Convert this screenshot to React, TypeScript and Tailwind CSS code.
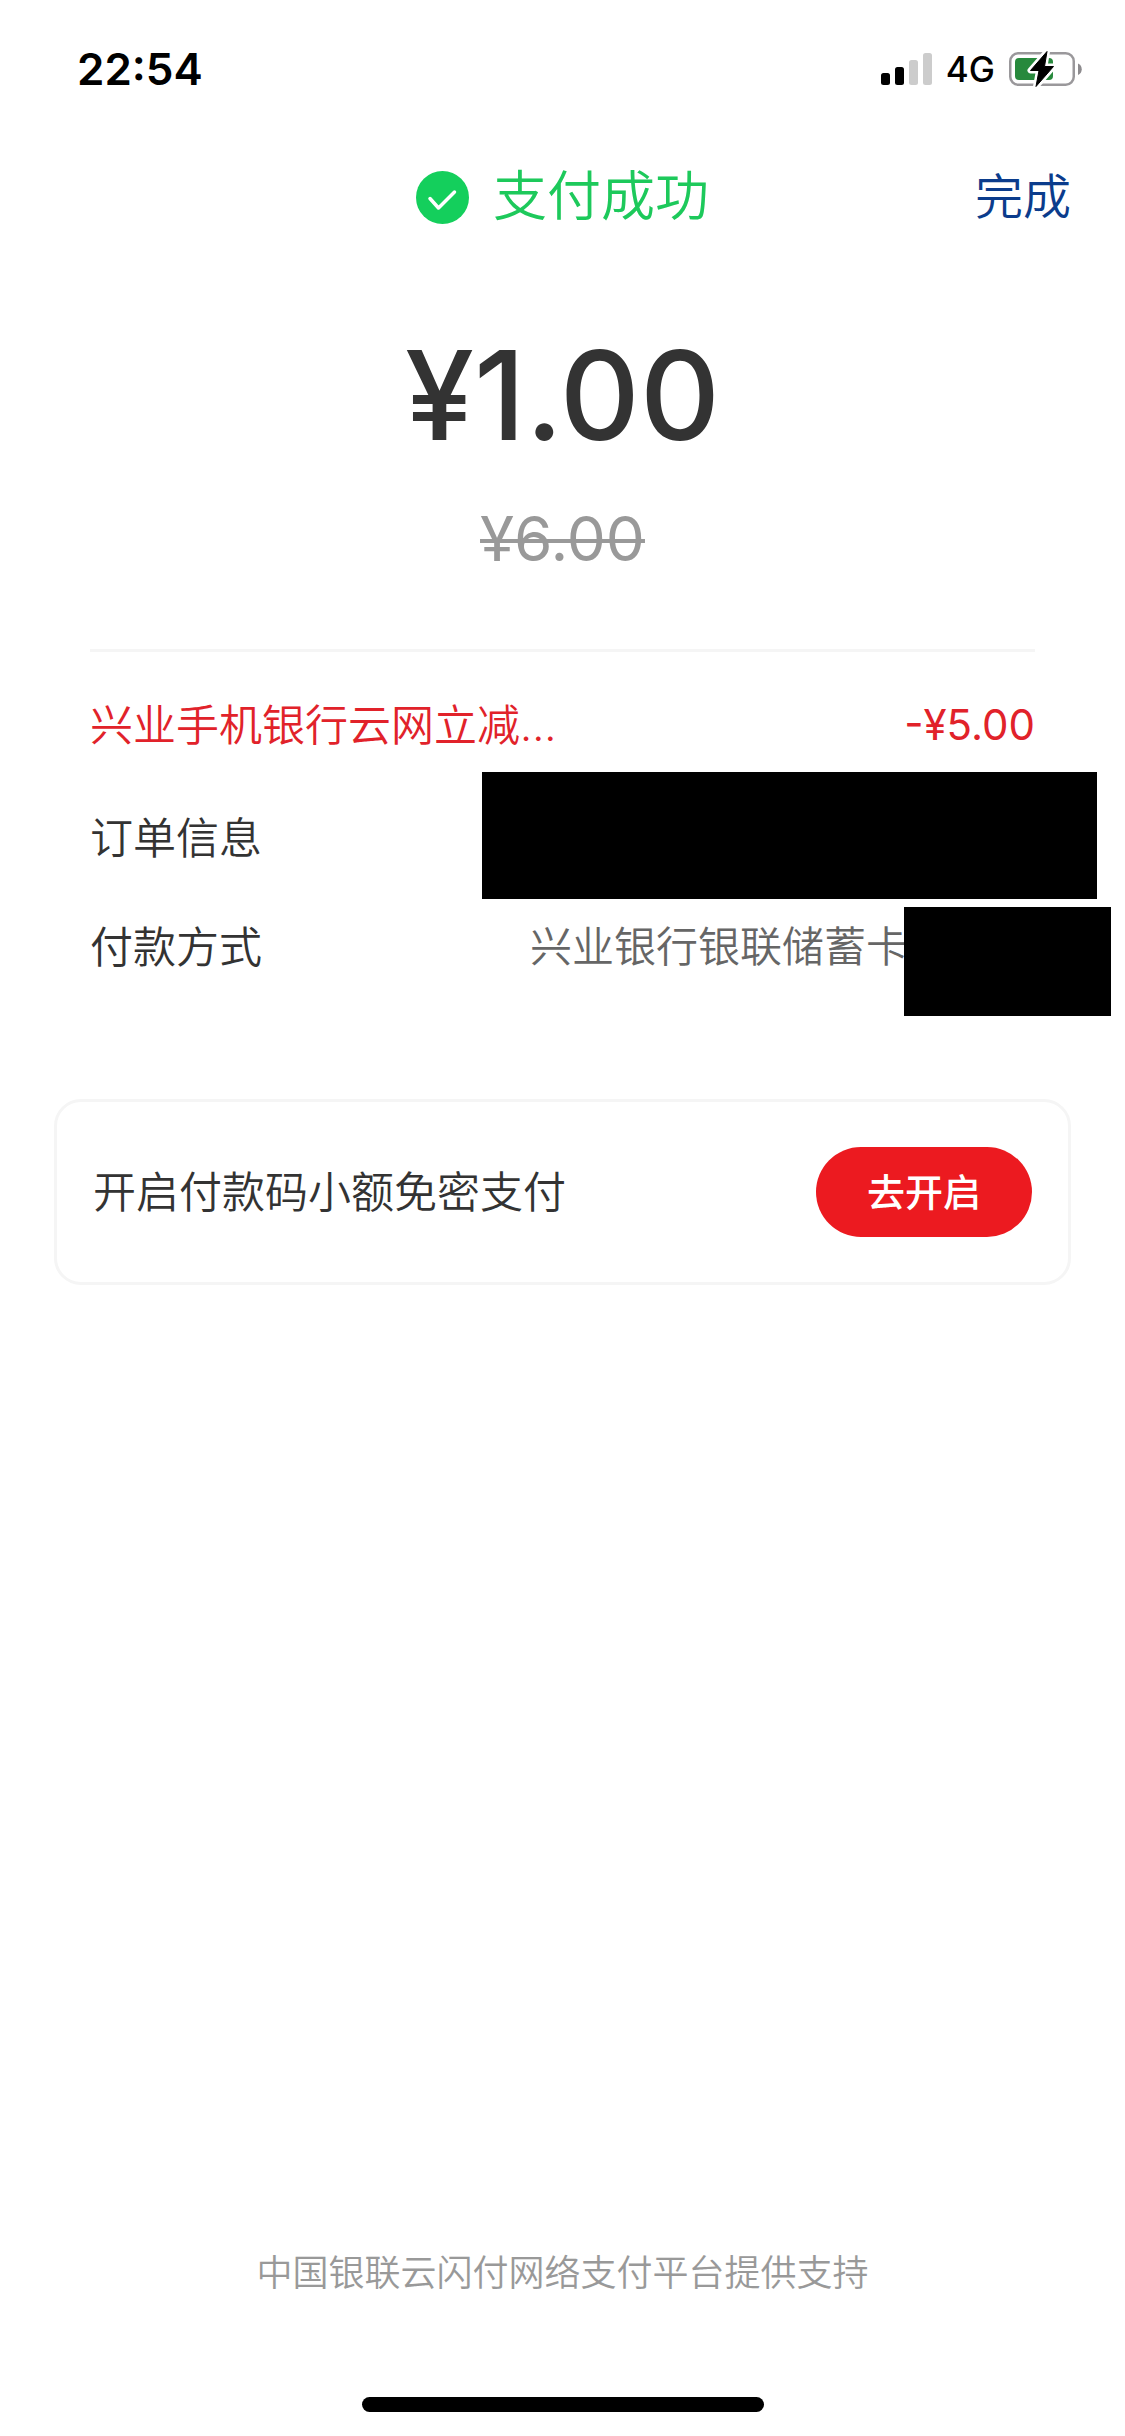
const fontStack = "font-['Inter','Noto_Sans_CJK_SC',sans-serif]";

function SignalIcon() {
  return (
    <svg width="51" height="32" viewBox="0 0 51 32" aria-label="信号强度" role="img">
      <rect x="0" y="20" width="9" height="12" rx="2.5" fill="#000" />
      <rect x="14" y="14" width="9" height="18" rx="2.5" fill="#000" />
      <rect x="28" y="7" width="9" height="25" rx="2.5" fill="#ccc" />
      <rect x="42" y="0" width="9" height="32" rx="2.5" fill="#ccc" />
    </svg>
  );
}

function BatteryIcon() {
  const bolt = "M38 0.5 L21.5 19.5 H30 L27 35.5 L44.5 15.5 H35.5 Z";
  return (
    <svg width="73" height="36" viewBox="0 0 73 36" aria-label="正在充电" role="img">
      <rect x="1.25" y="2.25" width="63.5" height="31.5" rx="8" fill="none" stroke="#9a989b" strokeWidth="2.5" />
      <path d="M69 12.5 C74 14.5 74 22 69 24 Z" fill="#8d8b8e" />
      <rect x="6" y="7" width="38" height="22" rx="4" fill="#27893c" />
      <path d={bolt} fill="#fff" stroke="#fff" strokeWidth="6" strokeLinejoin="round" />
      <path d={bolt} fill="#000" stroke="#000" strokeWidth="1" strokeLinejoin="round" />
    </svg>
  );
}

function SuccessIcon() {
  return (
    <svg width="53" height="53" viewBox="0 0 53 53" aria-hidden="true">
      <circle cx="26.5" cy="26.5" r="26.5" fill="#14cf5c" />
      <path d="M14 27.5 L22.5 37 L38.5 21" fill="none" stroke="#fff" strokeWidth="3.5" strokeLinecap="round" strokeLinejoin="round" />
    </svg>
  );
}

function StatusBar() {
  return (
    <div className="flex h-[138px] items-center justify-between pr-[43px] pl-[77px] text-black">
      <time className="text-[44px] leading-none font-semibold">22:54</time>
      <div className="flex items-center gap-[14px]">
        <SignalIcon />
        <span className="text-[35px] leading-none font-medium">4G</span>
        <BatteryIcon />
      </div>
    </div>
  );
}

export default function App() {
  return (
    <div className={`flex min-h-screen flex-col bg-white text-[#333] ${fontStack}`} lang="zh-CN">
      <StatusBar />

      <header className="grid h-[118px] grid-cols-[1fr_auto_1fr] items-center px-[54px]">
        <div className="col-start-2 flex items-center gap-6">
          <SuccessIcon />
          <h1 className="text-[54px] leading-[60px] font-[350] text-[#1dc95b]">支付成功</h1>
        </div>
        <button type="button" className="justify-self-end text-[48px] leading-[60px] font-[350] text-[#0b3c8c]">
          完成
        </button>
      </header>

      <main>
        <section className="flex flex-col items-center gap-[52px] pt-[77px] pb-20">
          <p className="text-[124px] leading-none font-medium">¥1.00</p>
          <del className="text-[62px] leading-[60px] text-[#999] decoration-4">¥6.00</del>
        </section>

        <hr className="mx-[90px] border-t-[3px] border-[#f5f5f5]" />

        <dl className="text-[43px] leading-[80px] font-[350]">
          <div className="flex h-[120px] items-center justify-between px-[90px] pt-[26px] text-[#e1222a]">
            <dt>兴业手机银行云网立减...</dt>
            <dd className="text-[42px] font-normal">-¥5.00</dd>
          </div>
          <div className="flex items-center justify-between pr-7 pl-[90px]">
            <dt className="pt-1">订单信息</dt>
            <dd className="h-[127px] w-[615px] bg-black" />
          </div>
          <div className="mt-2 flex items-start justify-between pr-[14px] pl-[90px]">
            <dt>付款方式</dt>
            <dd className="flex text-[42px] text-[#666]">
              <span className="-mr-1">兴业银行银联储蓄卡</span>
              <span className="relative h-[109px] w-[207px] bg-black" />
            </dd>
          </div>
        </dl>

        <section className="mx-[54px] mt-[83px] flex items-center justify-between rounded-[27px] border-[3px] border-[#f5f5f5] px-9 py-[45px]">
          <p className="text-[43px] leading-[60px] font-[350]">开启付款码小额免密支付</p>
          <button type="button" className="h-[90px] w-[216px] rounded-full bg-[#ec1a20] text-[38px] font-medium text-white">
            去开启
          </button>
        </section>
      </main>

      <footer className="mt-auto flex flex-col items-center gap-[100px] pb-6">
        <p className="text-[36px] leading-[48px] font-[350] text-[#999]">中国银联云闪付网络支付平台提供支持</p>
        <div className="h-[15px] w-[402px] rounded-full bg-black" />
      </footer>
    </div>
  );
}
